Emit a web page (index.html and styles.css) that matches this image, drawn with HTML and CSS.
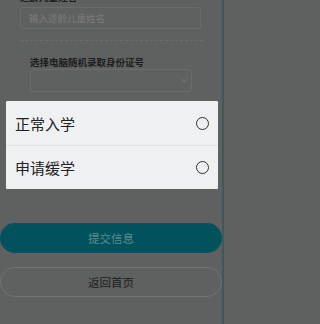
FILE: index.html
```html
<!DOCTYPE html>
<html lang="zh">
<head>
<meta charset="utf-8">
<title>入学登记</title>
<link rel="stylesheet" href="styles.css">
</head>
<body>
<div class="page">
  <div class="field">
    <div class="label">适龄儿童姓名</div>
    <div class="input"><span class="placeholder">输入适龄儿童姓名</span></div>
  </div>
  <div class="sep"></div>
  <div class="field field-inner">
    <div class="label label-inner">选择电脑随机录取身份证号</div>
    <div class="select">
      <svg class="chev" width="7" height="5" viewBox="0 0 7 5"><path d="M1 1.2L3.5 3.7L6 1.2" fill="none" stroke="#7c7d7d" stroke-width="1"/></svg>
    </div>
  </div>
  <div class="actions">
    <div class="btn btn-primary">提交信息</div>
    <div class="btn btn-ghost">返回首页</div>
  </div>
</div>
<div class="mask">
  <div class="sheet">
    <div class="option"><span class="opt-text">正常入学</span><span class="radio"></span></div>
    <div class="option"><span class="opt-text">申请缓学</span><span class="radio"></span></div>
  </div>
</div>
</body>
</html>
```
FILE: styles.css
```css
html {
  background: #5f6060;
}
html, body {
  margin: 0;
  padding: 0;
}
body {
  width: 224px;
  height: 324px;
  overflow: hidden;
  background: #5f6060;
  font-family: "Noto Sans CJK SC", "Noto Sans", sans-serif;
  position: relative;
}
.page {
  width: 222px;
  height: 334px;
  margin-top: -10px;
  border-right: 2px solid #3f585b;
  display: flex;
  flex-direction: column;
}
.field {
  padding: 0 21px 0 20px;
  display: flex;
  flex-direction: column;
}
.label {
  font-size: 9.5px;
  line-height: 14px;
  font-weight: 700;
  color: #1c1d1d;
}
.input {
  margin-top: 3px;
  height: 20px;
  border: 1px solid #6a6b6b;
  border-radius: 3px;
  padding-left: 8px;
  display: flex;
  align-items: center;
}
.placeholder {
  font-size: 9.5px;
  color: #7b7c7c;
}
.sep {
  margin: 11px 19px 0 20px;
  border-top: 1px dashed #6c6d6d;
}
.field-inner {
  margin-top: 15px;
  padding: 0 30px 0 30px;
}
.label-inner {
  line-height: 12px;
}
.select {
  margin-top: 1px;
  height: 21px;
  border: 1px solid #6a6b6b;
  border-radius: 3px;
  display: flex;
  align-items: center;
  justify-content: flex-end;
  padding-right: 3px;
}
.actions {
  margin-top: 131px;
  display: flex;
  flex-direction: column;
  gap: 14px;
}
.btn {
  height: 30px;
  border-radius: 15px;
  display: flex;
  align-items: center;
  justify-content: center;
  font-size: 11.5px;
  box-sizing: border-box;
}
.btn-primary {
  background: #02525e;
  color: #5f8a90;
}
.btn-ghost {
  border: 1px solid #717272;
  color: #1c1d1d;
}
.mask {
  position: absolute;
  inset: 0;
  display: flex;
  justify-content: center;
  align-items: flex-start;
  padding-top: 101px;
}
.sheet {
  width: 212px;
  background: #eff0f2;
  border-radius: 1px;
  display: flex;
  flex-direction: column;
}
.option {
  height: 44px;
  display: flex;
  align-items: center;
  justify-content: space-between;
  padding: 0 9px;
}
.option + .option {
  border-top: 1px solid #e0e1e3;
  height: 43px;
}
.opt-text {
  font-size: 15px;
  color: #222;
}
.radio {
  width: 11px;
  height: 11px;
  border: 1.4px solid #333;
  border-radius: 50%;
}
```
